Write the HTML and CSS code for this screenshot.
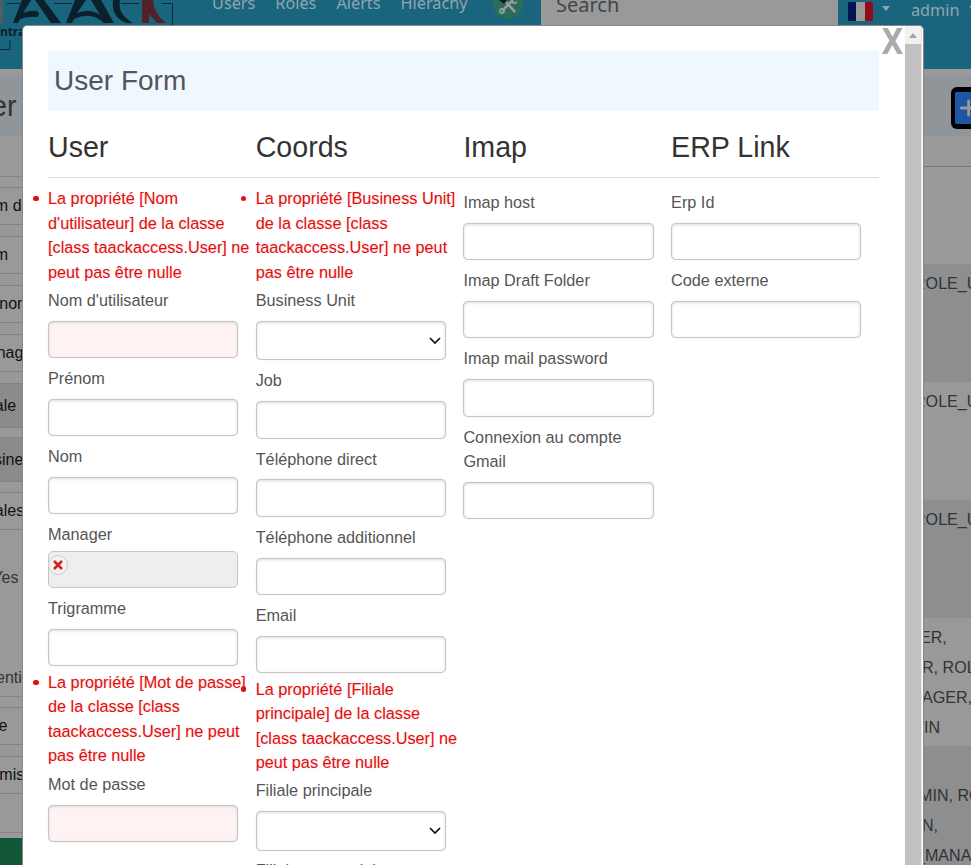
FILE: index.html
```html
<!DOCTYPE html>
<html lang="fr">
<head>
<meta charset="utf-8">
<title>User Form</title>
<link rel="stylesheet" href="styles.css">
</head>
<body>
<div class="page">
  <header class="topbar">
    <svg class="logo" width="174" height="54" viewBox="0 0 174 54">
      <path d="M0 0H3.500V23H0Z" fill="#4a5f66"/>
      <path d="M7 3.500H20M54 3.500H72M121 3.500H139M162 3.500H172.500V25M10 40V49.500H0" fill="none" stroke="#0e2636"/>
      <path d="M22 0H31L23 13Q31 10 37 11Q41 14 37 17Q29 16 20 19L18 23H13ZM35 0H44L61 23H51ZM75 0H86L77 13Q90 8 100 15L91 0H101L114 23H104Q91 11 74 19L72 23H66ZM113 0H120Q117 14 133 23H126Q111 17 113 0Z" fill="#0b1f2d"/>
      <path d="M142 0H153Q153 13 166 23H157L149 14V23H142Z" fill="#54212a"/>
    </svg>
    <span class="logo-text">ntra</span>
    <nav class="nav"><span>Users</span><span>Roles</span><span>Alerts</span><span>Hierachy</span></nav>
    <svg class="tools" width="30" height="20" viewBox="0 0 30 20">
      <circle cx="15" cy="4" r="15" fill="#2b6d5b"/>
      <path d="M6 0H14L11 4Z" fill="#171c1b"/>
      <path d="M9 11L20 0M13 2L22 12" stroke="#9a9d98" stroke-width="2.600"/>
      <circle cx="9" cy="11" r="2.200" fill="none" stroke="#9a9d98" stroke-width="1.500"/>
      <path d="M19 1Q20 5 24 2" fill="none" stroke="#9a9d98" stroke-width="2"/>
    </svg>
    <div class="search">Search</div>
    <span class="flag"><i></i><i></i><i></i></span>
    <b class="caret"></b>
    <span class="admin">admin</span>
    <b class="caret"></b>
  </header>
  <div class="titlebar"><span>er</span><span class="add"><svg width="20" height="32" viewBox="0 0 20 32"><path d="M8 16H20M17 7V25" stroke="#999" stroke-width="3.500" stroke-linecap="round"/></svg></span></div>
  <main class="content">
    <aside class="filters">
      <div class="filter">Nom d'utilisateur</div>
      <div class="filter">Nom</div>
      <div class="filter">Prénom</div>
      <div class="filter">Manager</div>
      <div class="filter tall">Filiale</div>
      <div class="filter tall">Business</div>
      <div class="filter last">Filiales</div>
      <div class="yes">Yes</div>
      <div class="group">enti</div>
      <div class="filter">Rôle</div>
      <div class="filter">Permission</div>
      <div class="green"></div>
    </aside>
    <section class="roles">
      <div class="role blank"></div>
      <div class="role odd">ROLE_USER</div>
      <div class="role">ROLE_USER</div>
      <div class="role odd">ROLE_USER</div>
      <div class="role multi"><span class="s1">ER,</span><span class="s2">R, ROLE</span><span class="s2">AGER,</span><span class="s3">IN</span></div>
      <div class="role odd end"><span class="s4">MIN, ROLE</span><span class="s2">N,</span><span class="s5">_MANAGER</span></div>
    </section>
  </main>
</div>

<div class="modal">
  <div class="modal-body">
    <h1>User Form</h1>
    <div class="heads"><h2>User</h2><h2>Coords</h2><h2>Imap</h2><h2>ERP Link</h2></div>
    <div class="columns">
      <div class="column">
        <ul class="error"><li>La propriété [Nom<br>d'utilisateur] de la classe<br>[class taackaccess.User] ne<br>peut pas être nulle</li></ul>
        <label>Nom d'utilisateur</label><div class="input invalid"></div>
        <label>Prénom</label><div class="input"></div>
        <label>Nom</label><div class="input"></div>
        <label class="tight">Manager</label><div class="input disabled"><svg width="20" height="20" viewBox="0 0 20 20"><circle cx="10" cy="10" r="9.500" fill="#f2f2f2" stroke="#ccc"/><path d="M6 6L14 14M14 6L6 14" stroke="#d32222" stroke-width="2.500"/></svg></div>
        <label>Trigramme</label><div class="input"></div>
        <ul class="error"><li>La propriété [Mot de passe]<br>de la classe [class<br>taackaccess.User] ne peut<br>pas être nulle</li></ul>
        <label>Mot de passe</label><div class="input invalid"></div>
      </div>
      <div class="column">
        <ul class="error"><li>La propriété [Business Unit]<br>de la classe [class<br>taackaccess.User] ne peut<br>pas être nulle</li></ul>
        <label>Business Unit</label><div class="input select"><svg width="12" height="8" viewBox="0 0 12 8"><path d="M1 1L6 6L11 1" fill="none" stroke="#111" stroke-width="1.700"/></svg></div>
        <label>Job</label><div class="input"></div>
        <label>Téléphone direct</label><div class="input"></div>
        <label>Téléphone additionnel</label><div class="input"></div>
        <label>Email</label><div class="input"></div>
        <ul class="error"><li>La propriété [Filiale<br>principale] de la classe<br>[class taackaccess.User] ne<br>peut pas être nulle</li></ul>
        <label>Filiale principale</label><div class="input select"><svg width="12" height="8" viewBox="0 0 12 8"><path d="M1 1L6 6L11 1" fill="none" stroke="#111" stroke-width="1.700"/></svg></div>
        <label class="partial">Filiales secondaires</label>
      </div>
      <div class="column">
        <label>Imap host</label><div class="input"></div>
        <label>Imap Draft Folder</label><div class="input"></div>
        <label>Imap mail password</label><div class="input"></div>
        <label>Connexion au compte<br>Gmail</label><div class="input"></div>
      </div>
      <div class="column">
        <label>Erp Id</label><div class="input"></div>
        <label>Code externe</label><div class="input"></div>
      </div>
    </div>
  </div>
  <div class="close">X</div>
  <div class="scrollbar"><div class="up"><b></b></div></div>
</div>
</body>
</html>
```
FILE: styles.css
```css
* { box-sizing: border-box; }
body { margin: 0; width: 971px; height: 865px; overflow: hidden; position: relative; background: #999; font: 16px/24.4px "Liberation Sans", sans-serif; color: #555; }
.page { height: 865px; overflow: hidden; background: #999; }
.topbar { height: 69px; background: #19657d; display: flex; align-items: flex-start; font-family: "Noto Sans", sans-serif; color: #8fa6ae; white-space: nowrap; overflow: hidden; }
.logo { flex: none; }
.logo-text { flex: none; width: 26px; margin: 20px 0 0 -174px; font: bold 12px/24px "Open Sans", sans-serif; color: #0b1f2d; letter-spacing: -.2px; }
.nav { display: flex; gap: 20px; margin: -9px 0 0 186px; width: 281px; flex: none; font-size: 16.250px; line-height: 24px; }
.tools { flex: none; margin-right: 18px; }
.search { flex: none; width: 297px; height: 50px; padding: 0 15px; background: #999; font-size: 20px; line-height: 30px; margin-top: -10px; color: #41464b; }
.flag { display: flex; margin: 2px 9px 0 10px; width: 25px; height: 19px; flex: none; }
.flag i { flex: 1; background: #00144f; }
.flag i + i { background: #999; }
.flag i + i + i { background: #930b1b; }
.caret { width: 0; height: 0; border: 4.500px solid transparent; border-top: 5px solid #93a9b1; border-bottom: 0; margin-top: 6px; flex: none; }
.admin { margin: -2px 9px 0 21px; font-size: 16.250px; }
.titlebar { margin-top: 7px; height: 60px; background: #909599; display: flex; justify-content: space-between; align-items: center; font-size: 28.800px; color: #333; }
.titlebar span:first-child { margin-left: -9px; }
.add { width: 20px; height: 42px; margin-top: 3px; border: 5px solid #000; border-width: 5px 0 5px 4px; border-radius: 6px 0 0 6px; background: #1d56a5; display: flex; align-items: center; overflow: hidden; }
.content { display: flex; justify-content: space-between; height: 729px; }
.filters { width: 23px; overflow: hidden; white-space: nowrap; color: #111; display: flex; flex-direction: column; padding-top: 51px; background: linear-gradient(#858585, #858585) 0 40px / 100% 1px no-repeat; }
.filter { flex: none; height: 38px; line-height: 36px; border: solid #828282; border-width: 1px 0; margin-bottom: 10.900px; text-indent: -25.600px; background: #999; }
.tall { height: 45px; line-height: 43px; background: #8b8b8b; margin-bottom: 9.600px; }
.last { margin-bottom: 36.500px; }
.yes { color: #333; text-indent: -7.600px; height: 100px; flex: none; }
.group { color: #333; text-indent: -4px; height: 31px; border-bottom: 1px solid #858585; margin-bottom: 10px; flex: none; }
.green { flex: none; margin-top: 27px; padding-top: 5px; height: 40px; border-top: 1px solid #858585; background: #115738; background-clip: content-box; }
.roles { width: 57px; overflow: hidden; white-space: nowrap; line-height: 30px; color: #333; padding-top: 30px; font-size: 16.100px; }
.role { height: 118px; padding-top: 3.500px; background: #999; }
.blank { height: 98px; border-top: 1px solid #777; }
.odd { background: #8c8e90; }
.multi { height: 128px; }
.end { height: 130px; padding-top: 34px; }
.role span { display: block; }
.s1 { margin-left: 6px; } .s2 { margin-left: 8px; } .s3 { margin-left: 10px; } .s4 { margin-left: 5px; } .s5 { margin-left: 2px; }
.modal { position: absolute; left: 22px; top: 25px; width: 902px; height: 870px; background: #fff; border: 1px solid #888; border-radius: 5px 5px 0 0; display: flex; overflow: hidden; font-size: 16.250px; }
.modal-body { width: 831px; margin-left: 25px; padding-top: 25px; flex: none; }
h1, h2 { margin: 0; font-weight: normal; font-size: 28.600px; }
h1 { height: 60px; line-height: 60px; padding-left: 6px; background: #f0f8ff; color: #555; font-size: 28px; }
.heads { display: grid; grid-template-columns: repeat(4, 207.700px); height: 67px; border-bottom: 1px solid #ddd; }
h2 { line-height: 72px; color: #333; }
.columns { display: grid; grid-template-columns: repeat(4, 207.700px); padding-top: 8.300px; }
.error { margin: 0; padding: 0; list-style: none; color: #e01010; white-space: nowrap; text-shadow: 0 0 2px #fcc; }
.error li { position: relative; }
.error li::before { content: ""; position: absolute; left: -15px; top: 9.700px; width: 5.500px; height: 5.500px; border-radius: 50%; background: #e01010; }
label { display: block; padding: 4px 0 8.500px; }
label.tight { padding-bottom: 4.200px; }
label.partial { padding-top: 3px; }
.input { width: 190.300px; height: 37.200px; border: 1px solid #c6c6c6; border-radius: 5px; box-shadow: inset 0 1px 3px #ddd, 0 0 1px #ccc; margin-bottom: 4px; background: #fff; }
.invalid { background: #fff2f2; }
.disabled { background: #eee; box-shadow: none; padding-top: 3px; }
.disabled svg { display: block; margin-left: -1px; }
.select { height: 39.600px; display: flex; align-items: center; justify-content: flex-end; padding-right: 4px; }
.close { font: bold 35px/36px "Noto Sans", sans-serif; color: #aaa; margin: -3px 0 0 1px; width: 25px; text-align: center; flex: none; transform: scaleX(.91); }
.scrollbar { width: 17px; background: #c1c1c1; flex: none; border-right: 1px solid #e5e5e5; }
.up { height: 18px; background: #f1f1f1; display: flex; align-items: center; justify-content: center; }
.up b { border: 4.500px solid transparent; border-bottom: 5px solid #a3a3a3; border-top: 0; }
```
